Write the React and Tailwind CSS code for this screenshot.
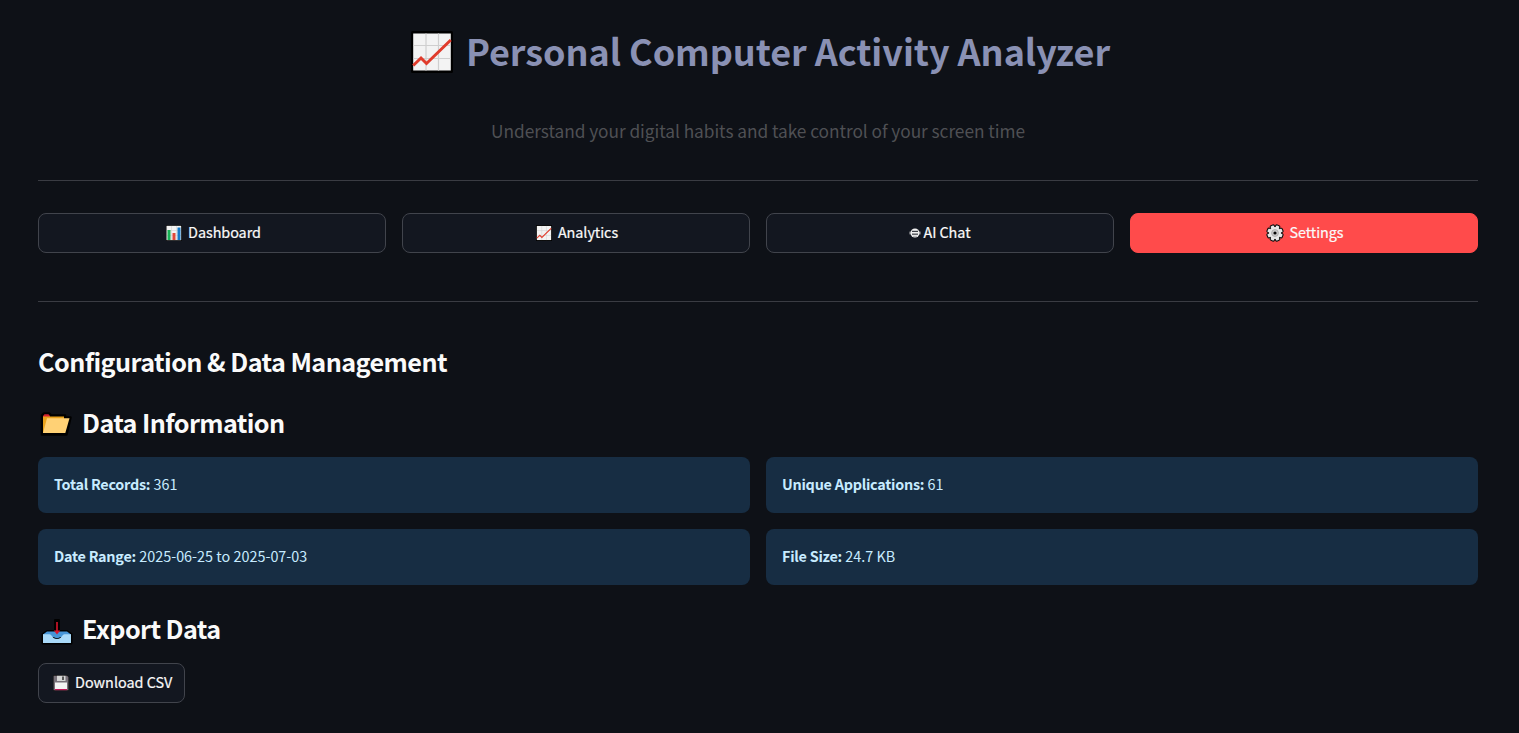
import React from "react";

function ChartUp({ className }) {
  return (
    <svg viewBox="0 0 42 42" className={className} aria-hidden="true">
      <rect width="42" height="42" rx="1.5" fill="#000" />
      <rect x="2.2" y="2.5" width="37.600" height="37" fill="#f3f3f3" />
      <path d="M15 2.5v37M27.5 2.5v37M2.5 14.5h37M2.5 27.5h37" stroke="#cfcfcf" strokeWidth="1.2" />
      <path d="M2.2 34.5L10 27L15.500 32.500L39.800 9" fill="none" stroke="#e03c2c" strokeWidth="3" />
    </svg>
  );
}

function BarChart({ className }) {
  return (
    <svg viewBox="0 0 16 16" className={className} aria-hidden="true">
      <rect width="16" height="16" rx="0.5" fill="#000" />
      <rect x="0.5" y="0.8" width="14.700" height="14.400" fill="#f3f3f3" />
      <path d="M5.500 1v14M10.500 1v14M1 5.500h14M1 10.500h14" stroke="#d4d4d4" strokeWidth="0.6" />
      <rect x="1.500" y="5" width="3" height="10" fill="#16b255" />
      <rect x="6.500" y="8" width="3" height="7" fill="#e0483a" />
      <rect x="11.500" y="2.500" width="3" height="12.500" fill="#1478c8" />
    </svg>
  );
}

function Robot({ className }) {
  return (
    <svg viewBox="0 0 12 10" className={className} aria-hidden="true">
      <ellipse cx="6" cy="5" rx="4.500" ry="4.600" fill="#f0f0f0" />
      <path d="M1.100 3.600v2.800M10.900 3.600v2.800" stroke="#dcdcdc" strokeWidth="1" />
      <rect x="3" y="2.800" width="6" height="1.100" fill="#2a2d35" />
      <rect x="3" y="5.600" width="6" height="1.100" fill="#2a2d35" />
      <rect x="4" y="7.900" width="4" height="0.500" fill="#777a80" />
    </svg>
  );
}

function Gear({ className }) {
  const angles = [0, 45, 90, 135, 180, 225, 270, 315];
  return (
    <svg viewBox="0 0 18 18" className={className} aria-hidden="true">
      <g fill="#e6e6e6" stroke="#111" strokeWidth="2">
        {angles.map((a) => (
          <rect key={a} x="7.300" y="1.200" width="3.400" height="4" rx="0.800" transform={`rotate(${a + 22.5} 9 9)`} />
        ))}
        <circle cx="9" cy="9" r="6.300" />
      </g>
      <g fill="#e6e6e6">
        {angles.map((a) => (
          <rect key={a} x="7.300" y="1.300" width="3.400" height="4" rx="0.800" transform={`rotate(${a + 22.5} 9 9)`} />
        ))}
        <circle cx="9" cy="9" r="6" />
      </g>
      <circle cx="9" cy="9" r="3.400" fill="#ccc" stroke="#aaa" strokeWidth="0.900" />
      <circle cx="9" cy="9" r="1.600" fill="#050505" />
    </svg>
  );
}

function Folder({ className }) {
  return (
    <svg viewBox="0 0 32 24" className={className} aria-hidden="true">
      <path d="M2 3.500L4 1.500H9L11 3.500H25V5.500H30.500L26.500 22.500H2Z" fill="#000" stroke="#000" strokeWidth="2.500" strokeLinejoin="round" />
      <path d="M3 4L4.500 2.200H8.500L10 4V7H3Z" fill="#d2202f" />
      <path d="M3 4.500H24V10L6 21H3Z" fill="#e9a21c" />
      <path d="M7 6.200H29.500L25.300 21H3Z" fill="#ffd175" />
    </svg>
  );
}

function Inbox({ className }) {
  return (
    <svg viewBox="0 0 32 26" className={className} aria-hidden="true">
      <path d="M6 12H14V1H18V12H26L30.500 15V24.500H1.500V15Z" fill="#000" stroke="#000" strokeWidth="2" strokeLinejoin="round" />
      <path d="M6 12.500H26L30 15.500V18H2V15.500Z" fill="#4795d7" />
      <path d="M2 15.300H8.500C11 15.300 11 20 16 20S21 15.300 23.500 15.300H30V24H2Z" fill="#a9d9f8" />
      <path d="M10.500 14.500L12 17.500Q16 21 20 17.500L21.500 14.500Z" fill="#4795d7" />
      <path d="M16 3V12" stroke="#d8142c" strokeWidth="1.600" />
      <path d="M12.800 11.500H19.200L16 15.500Z" fill="#d8142c" />
    </svg>
  );
}

function Floppy({ className }) {
  return (
    <svg viewBox="0 0 16 16" className={className} aria-hidden="true">
      <path d="M0 0H14L16 2V16H0Z" fill="#111" />
      <path d="M0.600 0.800H14L15.400 2V15.200H0.600Z" fill="#777079" />
      <rect x="4" y="0.800" width="8.500" height="5.200" fill="#d6d6d6" />
      <rect x="9" y="1.500" width="2" height="3.500" fill="#555" />
      <rect x="2" y="7.500" width="12" height="6.500" fill="#f4f4f4" />
      <rect x="2" y="14" width="12" height="1.200" fill="#c2185b" />
    </svg>
  );
}

const tabs = [
  { label: "Dashboard", Icon: BarChart, icon: "h-4 w-4 ml-px mr-[6px]" },
  { label: "Analytics", Icon: ChartUp, icon: "h-4 w-4 mr-[6px]" },
  { label: "AI Chat", Icon: Robot, icon: "-ml-[2px] h-[10px] w-3 mr-[2px]" },
  { label: "Settings", Icon: Gear, icon: "h-[18px] w-[18px] mr-[5px]", active: true },
];

const facts = [
  ["Total Records:", "361"],
  ["Unique Applications:", "61"],
  ["Date Range:", "2025-06-25 to 2025-07-03"],
  ["File Size:", "24.7 KB"],
];

export default function App() {
  return (
    <div className="h-[733px] overflow-hidden bg-[#0e1117] pl-[38px] pr-[41px] font-['Noto_Sans_CJK_SC',sans-serif] text-[14.4px] text-[#fafafa]">
      <header className="flex h-[180px] flex-col items-center">
        <h1 className="mt-[28px] flex h-12 items-center pl-[5px] text-[36px] font-bold leading-[48px] tracking-[-0.06px] text-[#8a91b4]">
          <ChartUp className="mr-[13px] h-[42px] w-[42px]" />
          <span className="whitespace-nowrap pb-[3px] leading-[45px]">Personal Computer Activity Analyzer</span>
        </h1>
        <p className="mt-[40px] text-[17.3px] leading-[30px] tracking-[-0.045px] text-[#4f5054]">
          Understand your digital habits and take control of your screen time
        </p>
      </header>
      <hr className="border-[#3a3c43]" />
      <nav className="mt-8 grid grid-cols-4 gap-4">
        {tabs.map(({ label, Icon, icon, active }) => (
          <button
            key={label}
            className={`flex h-10 items-center justify-center rounded-lg border pl-[2px] ${
              active ? "border-[#ff4b4b] bg-[#ff4b4b]" : "border-[#41444c] bg-[#131720]"
            }`}
          >
            <Icon className={icon} />
            <span className="pb-[2px] leading-[22px] tracking-[-0.05px] [-webkit-text-stroke:0.2px]">{label}</span>
          </button>
        ))}
      </nav>
      <hr className="mt-12 border-[#3a3c43]" />
      <h2 className="mt-[42px] text-[25.2px] font-bold leading-[34px] tracking-[-0.57px]">
        Configuration &amp; Data Management
      </h2>
      <h2 className="mt-[27px] flex h-[34px] items-center text-[25.2px] font-bold leading-[34px] tracking-[-0.6px]">
        <Folder className="ml-[2px] mr-[10px] mt-[3px] h-6 w-8" />
        Data Information
      </h2>
      <section className="mt-[18px] grid grid-cols-2 gap-4">
        {facts.map(([name, value]) => (
          <p key={name} className="h-14 rounded-lg bg-[#172d43] px-4 leading-[54px] text-[#c7ebff]">
            <strong className="font-bold tracking-[-0.25px]">{name}</strong> {value}
          </p>
        ))}
      </section>
      <h2 className="mt-[26px] flex h-[34px] items-center text-[25.2px] font-bold leading-[34px] tracking-[-0.6px]">
        <Inbox className="ml-[3px] mr-[9px] mt-[8px] h-[26px] w-8" />
        Export Data
      </h2>
      <button className="mt-[18px] flex h-10 w-[147px] items-center rounded-lg border border-[#41444c] bg-[#131720] pl-[14px]">
        <Floppy className="mr-[6px] h-4 w-4" />
        <span className="whitespace-nowrap pb-[2px] leading-[22px] [-webkit-text-stroke:0.2px]">Download CSV</span>
      </button>
    </div>
  );
}
